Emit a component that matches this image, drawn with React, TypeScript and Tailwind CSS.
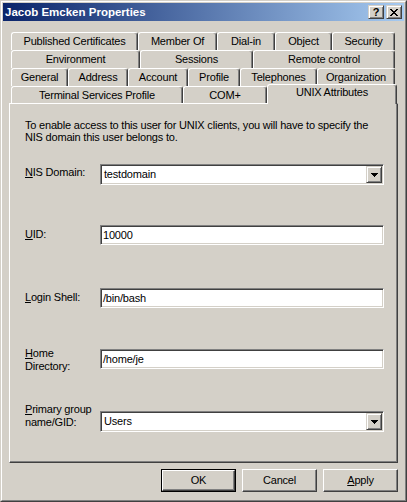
import React from "react";

interface Tab {
  label: string;
  w: string;
}

// back rows of the stacked tab strip (front row is drawn separately)
const backRows: Tab[][] = [
  [
    { label: "Published Certificates", w: "w-[127px]" },
    { label: "Member Of", w: "w-[79px]" },
    { label: "Dial-in", w: "w-[58px]" },
    { label: "Object", w: "w-[57px]" },
    { label: "Security", w: "w-[63px]" },
  ],
  [
    { label: "Environment", w: "w-[129px]" },
    { label: "Sessions", w: "w-[113px]" },
    { label: "Remote control", w: "w-[142px]" },
  ],
  [
    { label: "General", w: "w-[57px]" },
    { label: "Address", w: "w-[60px]" },
    { label: "Account", w: "w-[60px]" },
    { label: "Profile", w: "w-[52px]" },
    { label: "Telephones", w: "w-[77px]" },
    { label: "Organization", w: "w-[78px]" },
  ],
];

const raised =
  "border border-t-white border-l-white border-r-[#404040] border-b-[#404040] shadow-[inset_-1px_-1px_0_#808080]";
const smallRaised =
  "border border-t-[#d4d0c8] border-l-[#d4d0c8] border-r-[#404040] border-b-[#404040] shadow-[inset_1px_1px_0_#ffffff,inset_-1px_-1px_0_#808080]";
const sunken =
  "border border-t-[#808080] border-l-[#808080] border-r-white border-b-white shadow-[inset_1px_1px_0_#404040,inset_-1px_-1px_0_#d4d0c8]";
const tabBase =
  "flex shrink-0 justify-center border-l border-t border-r border-l-white border-t-white border-r-[#404040] rounded-t-[3px] shadow-[inset_-1px_0_0_#808080] whitespace-nowrap";

function TabCell({ label, w }: Tab) {
  return <div className={`${tabBase} ${w} h-full pt-[2px]`}>{label}</div>;
}

function TextBox({ value }: { value: string }) {
  return (
    <div className={`${sunken} w-[284px] h-[20px] bg-white p-[1px] flex items-center`}>
      <span className="pl-[1px]">{value}</span>
    </div>
  );
}

function ComboBox({ value }: { value: string }) {
  return (
    <div className={`${sunken} w-[284px] h-[21px] bg-white p-[1px] flex`}>
      <span className="flex-1 pl-[2px] flex items-center">{value}</span>
      <div className={`${smallRaised} w-[16px] h-full bg-[#d4d0c8] flex items-center justify-center`}>
        <svg width="7" height="4" viewBox="0 0 7 4" shapeRendering="crispEdges">
          <path d="M0 0h7v1H0zM1 1h5v1H1zM2 2h3v1H2zM3 3h1v1H3z" fill="#000" />
        </svg>
      </div>
    </div>
  );
}

function PushButton({ children, isDefault }: { children: React.ReactNode; isDefault?: boolean }) {
  if (isDefault) {
    return (
      <div className="w-[75px] h-[23px] border border-black">
        <div className={`${raised} w-full h-full flex items-center justify-center`}>{children}</div>
      </div>
    );
  }
  return <div className={`${raised} w-[75px] h-[23px] flex items-center justify-center`}>{children}</div>;
}

export default function App() {
  return (
    <div
      className="w-[407px] h-[502px] bg-[#d4d0c8] text-black text-[11px] leading-[13px] tracking-[-0.2px] border border-t-[#d4d0c8] border-l-[#d4d0c8] border-r-[#404040] border-b-[#404040]"
      style={{ fontFamily: '"Liberation Sans", Arial, sans-serif' }}
    >
      <div className="h-full border border-t-white border-l-white border-r-[#808080] border-b-[#808080] p-[1px] flex flex-col">
        {/* Title bar */}
        <div className="h-[18px] shrink-0 bg-[linear-gradient(to_right,#0a246a,#a6caf0)] flex items-center justify-between pl-[2px] pr-[2px]">
          <span className="text-white font-bold text-[11.5px] tracking-normal">Jacob Emcken Properties</span>
          <div className="flex gap-[2px]">
            <div className={`${smallRaised} w-[16px] h-[14px] bg-[#d4d0c8] flex items-center justify-center font-bold text-[11px] leading-none tracking-normal`}>
              ?
            </div>
            <div className={`${smallRaised} w-[16px] h-[14px] bg-[#d4d0c8] flex items-center justify-center`}>
              <svg width="8" height="7" viewBox="0 0 8 7" shapeRendering="crispEdges">
                <path
                  d="M0 0h2v1H0zM6 0h2v1H6zM1 1h2v1H1zM5 1h2v1H5zM2 2h4v1H2zM3 3h2v1H3zM2 4h4v1H2zM1 5h2v1H1zM5 5h2v1H5zM0 6h2v1H0zM6 6h2v1H6z"
                  fill="#000"
                />
              </svg>
            </div>
          </div>
        </div>

        {/* Tab strip */}
        <div className="mt-[11px] ml-[8px] w-[384px] flex flex-col">
          {backRows.map((row, i) => (
            <div key={i} className="flex h-[18px]">
              {row.map((t) => (
                <TabCell key={t.label} {...t} />
              ))}
            </div>
          ))}
          <div className="flex items-end h-[17px]">
            <div className={`${tabBase} w-[172px] h-[17px] pt-[2px]`}>Terminal Services Profile</div>
            <div className={`${tabBase} w-[84px] h-[17px] pt-[2px]`}>COM+</div>
            <div className={`${tabBase} relative z-10 -mb-[1px] w-[130px] h-[20px] pt-[1px] bg-[#d4d0c8]`}>
              UNIX Attributes
            </div>
          </div>
        </div>

        {/* Page */}
        <div className={`${raised} ml-[6px] w-[389px] h-[360px] shrink-0 pl-[15px] pt-[15px] flex flex-col`}>
          <p className="leading-[12px]">
            To enable access to this user for UNIX clients, you will have to specify the
            <br />
            NIS domain this user belongs to.
          </p>

          <div className="mt-[21px] flex h-[21px]">
            <label className="w-[75px] pt-[2px]">
              <span className="underline">N</span>IS Domain:
            </label>
            <ComboBox value="testdomain" />
          </div>

          <div className="mt-[40px] flex h-[20px]">
            <label className="w-[75px] pt-[3px]">
              <span className="underline">U</span>ID:
            </label>
            <TextBox value="10000" />
          </div>

          <div className="mt-[43px] flex h-[20px]">
            <label className="w-[75px] pt-[3px]">
              <span className="underline">L</span>ogin Shell:
            </label>
            <TextBox value="/bin/bash" />
          </div>

          <div className="mt-[39px] flex h-[26px] items-start">
            <label className="w-[75px]">
              <span className="underline">H</span>ome
              <br />
              Directory:
            </label>
            <div className="mt-[2px]">
              <TextBox value="/home/je" />
            </div>
          </div>

          <div className="mt-[30px] flex h-[29px] items-start">
            <label className="w-[75px]">
              <span className="underline">P</span>rimary group
              <br />
              name/GID:
            </label>
            <div className="mt-[8px]">
              <ComboBox value="Users" />
            </div>
          </div>
        </div>

        {/* Buttons */}
        <div className="mt-[6px] pr-[6px] flex justify-end gap-[6px]">
          <PushButton isDefault>OK</PushButton>
          <PushButton>Cancel</PushButton>
          <PushButton>
            <span className="underline">A</span>pply
          </PushButton>
        </div>
      </div>
    </div>
  );
}
